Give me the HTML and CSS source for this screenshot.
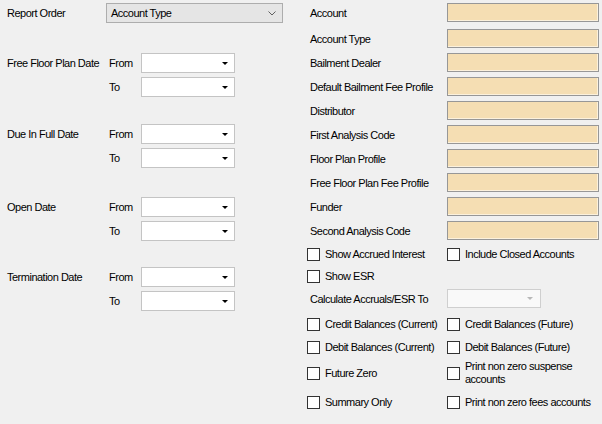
FILE: index.html
```html
<!DOCTYPE html>
<html>
<head>
<meta charset="utf-8">
<link rel="stylesheet" href="styles.css">
</head>
<body>
<div class="form">
  <div class="left">
    <div class="order-row">
      <span class="order-lbl">Report Order</span>
      <div class="combo">
        <span>Account Type</span>
        <svg class="chev" width="8" height="5" viewBox="0 0 8 5"><polyline points="0.5,0.5 4,4 7.5,0.5" fill="none" stroke="#606060" stroke-width="1"/></svg>
      </div>
    </div>

    <div class="grp g-first">
      <span class="glbl">Free Floor Plan Date</span>
      <span class="sub">From</span><div class="date"><span class="tri"></span></div>
      <span class="sub">To</span><div class="date"><span class="tri"></span></div>
    </div>
    <div class="grp">
      <span class="glbl">Due In Full Date</span>
      <span class="sub">From</span><div class="date"><span class="tri"></span></div>
      <span class="sub">To</span><div class="date"><span class="tri"></span></div>
    </div>
    <div class="grp g-open">
      <span class="glbl">Open Date</span>
      <span class="sub">From</span><div class="date"><span class="tri"></span></div>
      <span class="sub">To</span><div class="date"><span class="tri"></span></div>
    </div>
    <div class="grp g-last">
      <span class="glbl">Termination Date</span>
      <span class="sub">From</span><div class="date"><span class="tri"></span></div>
      <span class="sub">To</span><div class="date"><span class="tri"></span></div>
    </div>
  </div>

  <div class="right">
    <div class="field f1"><span class="flbl">Account</span><div class="inp"></div></div>
    <div class="field f2"><span class="flbl">Account Type</span><div class="inp"></div></div>
    <div class="field"><span class="flbl">Bailment Dealer</span><div class="inp"></div></div>
    <div class="field"><span class="flbl">Default Bailment Fee Profile</span><div class="inp"></div></div>
    <div class="field"><span class="flbl">Distributor</span><div class="inp"></div></div>
    <div class="field"><span class="flbl">First Analysis Code</span><div class="inp"></div></div>
    <div class="field"><span class="flbl">Floor Plan Profile</span><div class="inp"></div></div>
    <div class="field"><span class="flbl">Free Floor Plan Fee Profile</span><div class="inp"></div></div>
    <div class="field"><span class="flbl">Funder</span><div class="inp"></div></div>
    <div class="field"><span class="flbl">Second Analysis Code</span><div class="inp"></div></div>

    <div class="crow r1">
      <div class="chk"><span class="box"></span><span>Show Accrued Interest</span></div>
      <div class="chk"><span class="box"></span><span>Include Closed Accounts</span></div>
    </div>
    <div class="crow r2">
      <div class="chk"><span class="box"></span><span>Show ESR</span></div>
    </div>
    <div class="crow r3">
      <span class="flbl">Calculate Accruals/ESR To</span>
      <div class="dcombo"><span class="tri gray"></span></div>
    </div>
    <div class="crow r4">
      <div class="chk"><span class="box"></span><span>Credit Balances (Current)</span></div>
      <div class="chk"><span class="box"></span><span>Credit Balances (Future)</span></div>
    </div>
    <div class="crow r5">
      <div class="chk"><span class="box"></span><span>Debit Balances (Current)</span></div>
      <div class="chk"><span class="box"></span><span>Debit Balances (Future)</span></div>
    </div>
    <div class="crow r6">
      <div class="chk"><span class="box"></span><span>Future Zero</span></div>
      <div class="chk"><span class="box"></span><span class="two">Print non zero suspense<br>accounts</span></div>
    </div>
    <div class="crow r7">
      <div class="chk"><span class="box"></span><span>Summary Only</span></div>
      <div class="chk"><span class="box"></span><span>Print non zero fees accounts</span></div>
    </div>
  </div>
</div>
</body>
</html>
```

FILE: styles.css
```css
html, body {
  margin: 0;
  padding: 0;
}
body {
  background: #f0f0f0;
  font-family: "Liberation Sans", Arial, sans-serif;
  font-size: 11px;
  letter-spacing: -0.5px;
  color: #000;
  width: 602px;
  height: 424px;
  overflow: hidden;
}
.form {
  display: flex;
  width: 602px;
  height: 424px;
}

/* left column */
.left {
  width: 307px;
  padding-left: 7px;
  box-sizing: border-box;
}
.order-row {
  display: flex;
  align-items: center;
  height: 20px;
  margin-top: 3px;
}
.order-lbl {
  width: 99px;
}
.combo {
  width: 177px;
  height: 20px;
  box-sizing: border-box;
  border: 1px solid #adadad;
  background: #e5e5e5;
  display: flex;
  align-items: center;
  justify-content: space-between;
  padding: 0 6px 0 4px;
}
.chev {
  display: block;
}
.grp {
  display: grid;
  grid-template-columns: 102px 32px 94px;
  grid-auto-rows: 20px;
  row-gap: 4px;
  align-items: center;
  margin-top: 27px;
}
.grp.g-first { margin-top: 30px; }
.grp.g-open { margin-top: 29px; }
.grp.g-last { margin-top: 26px; }
.glbl {
  grid-column: 1;
  grid-row: 1;
}
.sub { grid-column: 2; }
.date {
  grid-column: 3;
  height: 20px;
  box-sizing: border-box;
  border: 1px solid #c4c4c4;
  background: #fff;
  display: flex;
  align-items: center;
  justify-content: flex-end;
  padding-right: 6px;
}
.tri {
  width: 0;
  height: 0;
  border-left: 3px solid transparent;
  border-right: 3px solid transparent;
  border-top: 3px solid #000;
}
.tri.gray {
  border-top-color: #b8b8b8;
}

/* right column */
.right {
  width: 295px;
  display: flex;
  flex-direction: column;
}
.field {
  display: grid;
  grid-template-columns: 140px 152px;
  align-items: center;
  height: 19px;
  margin-top: 5px;
}
.field.f1 { margin-top: 3px; }
.field.f2 { margin-top: 7px; }
.flbl {
  padding-left: 3px;
}
.inp {
  height: 19px;
  box-sizing: border-box;
  border: 1px solid #979797;
  background: #f5deb3;
  box-shadow: inset -1px -1px 0 #fcf1dc;
}
.crow {
  display: grid;
  grid-template-columns: 140px 1fr;
  align-items: center;
  height: 20px;
}
.r1 { margin-top: 4px; }
.r2 { margin-top: 2px; }
.r3 { margin-top: 3px; height: 19px; }
.r4 { margin-top: 6px; }
.r5 { margin-top: 3px; }
.r6 { margin-top: 2px; height: 28px; }
.r7 { margin-top: 5px; }
.chk {
  display: flex;
  align-items: center;
}
.box {
  width: 13px;
  height: 13px;
  box-sizing: border-box;
  border: 1px solid #333;
  background: #fff;
  margin-right: 5px;
  flex: none;
}
.two {
  line-height: 13px;
}
.dcombo {
  width: 94px;
  height: 19px;
  box-sizing: border-box;
  border: 1px solid #cfcfcf;
  background: #f9f9f9;
  display: flex;
  align-items: center;
  justify-content: flex-end;
  padding-right: 7px;
}
```
